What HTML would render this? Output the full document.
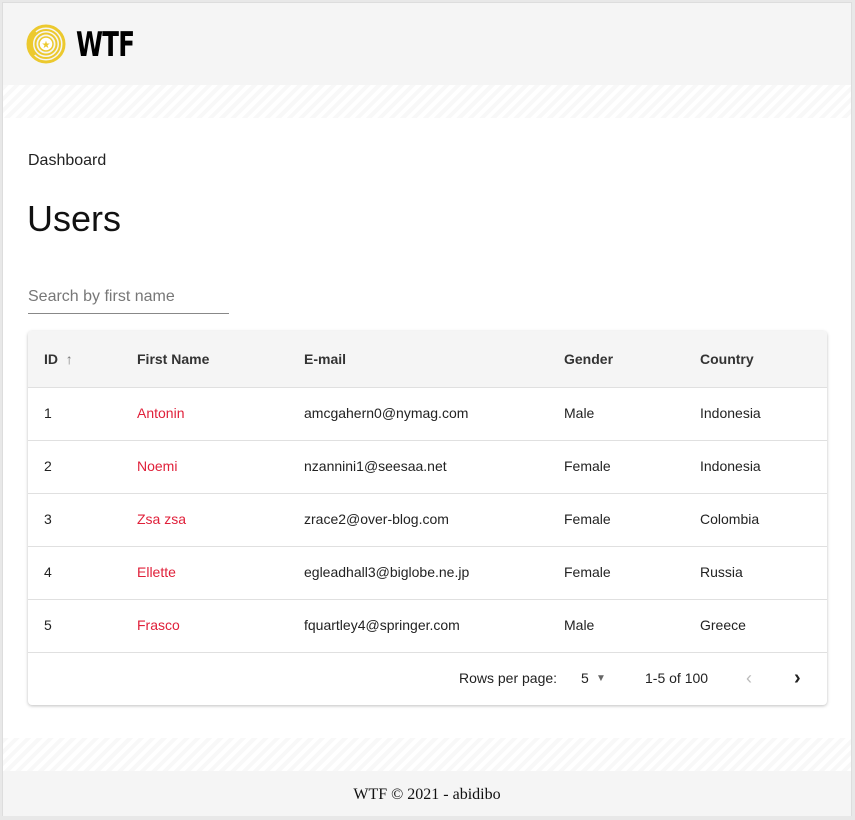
<!DOCTYPE html>
<html><head><style>
body{margin:0;width:855px;height:820px;background:#e8e8e8;font-family:"Liberation Sans",Roboto,sans-serif;position:relative;overflow:hidden}
.frame{position:absolute;left:2px;top:2px;width:850px;height:814px;background:#fff;border:1px solid #ddd;box-sizing:border-box}
.hdr{position:absolute;left:0;top:0;width:100%;height:82px;background:#f5f5f5}
.stripe{position:absolute;left:0;width:100%;height:33px;background:repeating-linear-gradient(135deg,#f8f8f8 0 4px,#fff 4px 8px)}
.ftr{position:absolute;left:0;top:768px;width:100%;height:45px;background:#f5f5f5;font-family:"Liberation Serif",serif;font-size:16px;text-align:center;line-height:48px;color:#111}
.abs{position:absolute}
.card{position:absolute;left:25px;top:328px;width:799px;height:374px;background:#fff;border-radius:4px;box-shadow:0 1px 3px rgba(0,0,0,.25);overflow:hidden}
.row{position:absolute;left:0;width:100%;height:53px;border-bottom:1px solid #e0e0e0;font-size:14px;color:#222}
.row span{position:absolute;top:0;line-height:53px}
.th{height:56px;background:#f5f5f5;font-weight:bold;font-size:14px;color:#333}
.th span{line-height:56px}
.red{color:#e0203a}
</style></head><body>
<div class="frame">
<div class="hdr">
<svg class="abs" style="left:23px;top:21px" width="40" height="40" viewBox="0 0 40 40">
<circle cx="20" cy="20" r="18" fill="none" stroke="#ecc92e" stroke-width="3"/>
<circle cx="20" cy="20" r="14" fill="none" stroke="#ecc92e" stroke-width="2"/>
<circle cx="20" cy="20" r="10.5" fill="none" stroke="#ecc92e" stroke-width="2"/>
<path d="M2 20 A18 18 0 0 1 8 6 L12 10 A12 12 0 0 0 10 30 L6 33 A18 18 0 0 1 2 20Z" fill="#ecc92e"/>
<circle cx="20" cy="20" r="7" fill="#fff" stroke="#ecc92e" stroke-width="1.5"/>
<text x="20" y="24" font-size="10" text-anchor="middle" fill="#ecc92e">★</text>
</svg>
<div class="abs" style="left:73px;top:22px;font-size:34px;font-weight:900;letter-spacing:-1px;transform:scaleX(0.72);transform-origin:left;color:#000;font-family:'DejaVu Sans',sans-serif">WTF</div>
</div>
<div class="stripe" style="top:82px"></div>
<div class="abs" style="left:25px;top:149px;font-size:16px;color:#222">Dashboard</div>
<div class="abs" style="left:24px;top:195px;font-size:36px;color:#111">Users</div>
<div class="abs" style="left:25px;top:285px;font-size:16px;color:#777">Search by first name</div>
<div class="abs" style="left:25px;top:310px;width:201px;height:1px;background:#888"></div>
<div class="card">
<div class="row th" style="top:0"><span style="left:16px">ID <span style="position:static;color:#777;font-weight:normal">&nbsp;↑</span></span><span style="left:109px">First Name</span><span style="left:276px">E-mail</span><span style="left:536px">Gender</span><span style="left:672px">Country</span></div>
<div class="row" style="top:56px"><span style="left:16px">1</span><span class="red" style="left:109px">Antonin</span><span style="left:276px">amcgahern0@nymag.com</span><span style="left:536px">Male</span><span style="left:672px">Indonesia</span></div>
<div class="row" style="top:109px"><span style="left:16px">2</span><span class="red" style="left:109px">Noemi</span><span style="left:276px">nzannini1@seesaa.net</span><span style="left:536px">Female</span><span style="left:672px">Indonesia</span></div>
<div class="row" style="top:162px"><span style="left:16px">3</span><span class="red" style="left:109px">Zsa zsa</span><span style="left:276px">zrace2@over-blog.com</span><span style="left:536px">Female</span><span style="left:672px">Colombia</span></div>
<div class="row" style="top:215px"><span style="left:16px">4</span><span class="red" style="left:109px">Ellette</span><span style="left:276px">egleadhall3@biglobe.ne.jp</span><span style="left:536px">Female</span><span style="left:672px">Russia</span></div>
<div class="row" style="top:268px"><span style="left:16px">5</span><span class="red" style="left:109px">Frasco</span><span style="left:276px">fquartley4@springer.com</span><span style="left:536px">Male</span><span style="left:672px">Greece</span></div>
<div class="row" style="top:321px;border:0"><span style="left:431px">Rows per page:</span><span style="left:553px">5</span><span style="left:568px;color:#666;font-size:10px">▼</span><span style="left:617px">1-5 of 100</span><span style="left:718px;color:#bbb;font-size:18px">‹</span><span style="left:766px;font-size:20px;font-weight:bold">›</span></div>
</div>
<div class="stripe" style="top:735px"></div>
<div class="ftr">WTF © 2021 - abidibo</div>
</div>
</body></html>
